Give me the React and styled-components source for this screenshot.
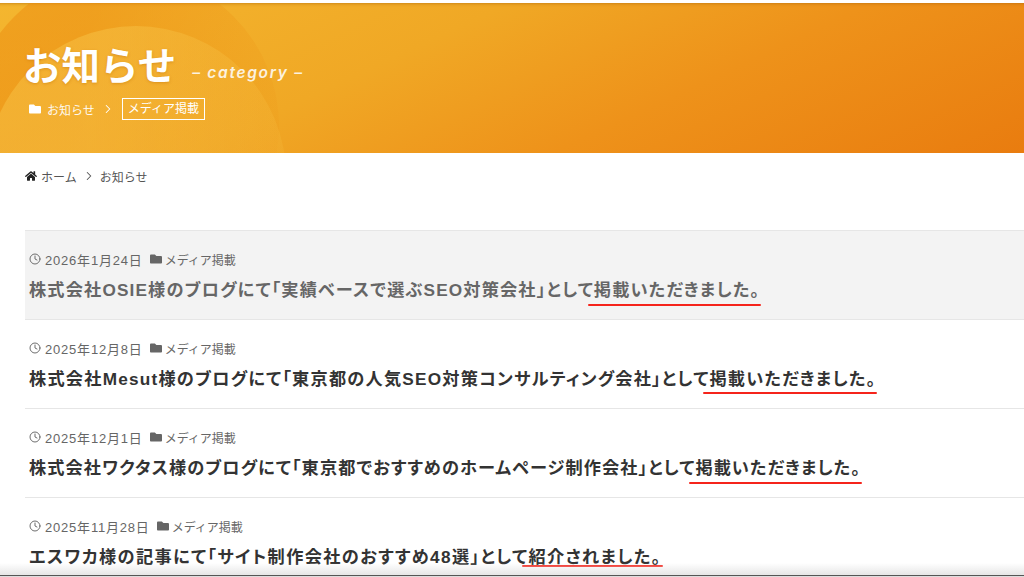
import React from "react";
import styled, { createGlobalStyle } from "styled-components";
import { FaFolder, FaHome } from "react-icons/fa";
import { Clock, ChevronRight } from "lucide-react";

const GlobalStyle = createGlobalStyle`
    html, body {
        margin: 0;
        padding: 0;
        background: #fff;
    }
    body {
        font-family: "Liberation Sans", "Noto Sans CJK JP", sans-serif;
    }
`

const Page = styled.div`
    position: relative;
    width: 1024px;
    height: 577px;
    overflow: hidden;
    padding-top: 3px;
    box-sizing: border-box;
    background: #fff;
`

// Hero

const Hero = styled.header`
    position: relative;
    height: 150px;
    box-sizing: border-box;
    padding: 36px 25px 0;
    overflow: hidden;
    color: #fff;
    background: linear-gradient(155deg, #f4b62f 0%, #f0a825 38%, #ee921a 65%, #e97c0f 100%);
    box-shadow: inset 0 4px 3px -3px rgba(170, 100, 10, 0.5);
`

const DarkDisc = styled.div`
    position: absolute;
    left: -31px;
    top: -32px;
    width: 310px;
    height: 310px;
    border-radius: 50%;
    background: linear-gradient(100deg, rgba(236, 140, 16, 0.5) 35%, rgba(236, 140, 16, 0.12) 90%);
`

const LightDisc = styled.div`
    position: absolute;
    left: -14px;
    top: 23px;
    width: 300px;
    height: 300px;
    border-radius: 50%;
    background: linear-gradient(100deg, rgba(247, 195, 70, 0.5) 35%, rgba(247, 195, 70, 0.16) 95%);
`

const HeroTitleRow = styled.div`
    position: relative;
    display: flex;
    align-items: flex-end;
    gap: 16px;
`

const HeroTitle = styled.h1`
    margin: 0 0 0 -2px;
    font-size: 38.5px;
    line-height: 56px;
    font-weight: 700;
    text-shadow: 0 1px 3px rgba(190, 110, 10, 0.45);
`

const HeroSub = styled.span`
    margin-bottom: 13px;
    font-family: "Inter", "Liberation Sans", sans-serif;
    font-size: 15.5px;
    font-style: italic;
    font-weight: 600;
    letter-spacing: 1.7px;
    opacity: 0.85;
`

const HeroCrumbs = styled.div`
    position: relative;
    display: flex;
    align-items: center;
    margin-top: 3px;
    padding-left: 4px;
    font-size: 12px;
    svg {
        flex: none;
    }
`

const HeroCrumbText = styled.span`
    margin-left: 6px;
    opacity: 0.92;
`

const CategoryTag = styled.span`
    margin-left: 7px;
    border: 1px solid #fff;
    padding: 0 5px;
    height: 22px;
    line-height: 20px;
    box-sizing: border-box;
`

// Breadcrumb

const Breadcrumb = styled.nav`
    display: flex;
    align-items: center;
    height: 20px;
    margin-top: 13px;
    padding-left: 25px;
    font-size: 12px;
    color: #555;
`

const CrumbLabel = styled.span`
    margin-left: 4px;
`

// List

const List = styled.ul`
    list-style: none;
    margin: 44px 0 0 25px;
    padding: 0;
    border-top: 1px solid #e6e6e6;
`

const Item = styled.li`
    height: 88px;
    box-sizing: content-box;
    padding: 0 0 0 4px;
    border-bottom: 1px solid #e6e6e6;
    background: ${props => (props.$active ? "#f3f3f3" : "#fff")};
    color: ${props => (props.$active ? "#666" : "#333")};
`

const Meta = styled.div`
    display: flex;
    align-items: center;
    height: 18px;
    padding-top: 19px;
    font-size: 12px;
    color: #666;
`

const MetaDate = styled.span`
    margin-left: 4px;
    font-size: 13px;
    letter-spacing: 0.8px;
`

const MetaCategory = styled.span`
    display: flex;
    align-items: center;
    margin-left: 7px;
    gap: 3px;
`

const Title = styled.h2`
    margin: 9px 0 0;
    font-size: 17.2px;
    line-height: 26px;
    font-weight: 700;
    white-space: nowrap;
    letter-spacing: ${props => props.$tracking}px;
    font-feature-settings: "palt";
`

// hand drawn red line, sits closer to the text on the last row
const Marked = styled.span`
    position: relative;
    &::after {
        content: "";
        position: absolute;
        left: -6px;
        right: -1px;
        bottom: ${props => props.$lineGap}px;
        height: 2.5px;
        background: #f5241b;
        border-radius: 1px;
    }
`

const BottomShade = styled.div`
    position: absolute;
    left: 0;
    right: 0;
    bottom: 0;
    height: 14px;
    background: linear-gradient(to bottom, rgba(230, 230, 230, 0), rgba(228, 228, 228, 0.9) 84%, #555 86%, #555 93%, #ddd 94%);
`

const posts = [
    { date: "2026年1月24日", before: "株式会社OSIE様のブログにて「実績ベースで選ぶSEO対策会社」として", mark: "掲載いただきました。", active: true, tracking: 1.16, lineGap: -6 },
    { date: "2025年12月8日", before: "株式会社Mesut様のブログにて「東京都の人気SEO対策コンサルティング会社」として", mark: "掲載いただきました。", tracking: 1.22, lineGap: -5 },
    { date: "2025年12月1日", before: "株式会社ワクタス様のブログにて「東京都でおすすめのホームページ制作会社」として", mark: "掲載いただきました。", tracking: 1.08, lineGap: -6 },
    { date: "2025年11月28日", before: "エスワカ様の記事にて「サイト制作会社のおすすめ48選」として", mark: "紹介されました。", tracking: 1.36, lineGap: 0 },
];

export default function App() {
    return (
        <Page>
            <GlobalStyle />

            <Hero>
                <DarkDisc />
                <LightDisc />
                <HeroTitleRow>
                    <HeroTitle>お知らせ</HeroTitle>
                    <HeroSub>– category –</HeroSub>
                </HeroTitleRow>
                <HeroCrumbs>
                    <FaFolder size={12} />
                    <HeroCrumbText>お知らせ</HeroCrumbText>
                    <ChevronRight size={14} strokeWidth={1.8} style={{ marginLeft: 6 }} />
                    <CategoryTag>メディア掲載</CategoryTag>
                </HeroCrumbs>
            </Hero>

            <Breadcrumb>
                <FaHome size={12} color="#222" />
                <CrumbLabel>ホーム</CrumbLabel>
                <ChevronRight size={14} strokeWidth={1.8} style={{ marginLeft: 5 }} />
                <CrumbLabel>お知らせ</CrumbLabel>
            </Breadcrumb>

            <List>
                {posts.map(post => (
                    <Item key={post.date} $active={post.active}>
                        <Meta>
                            <Clock size={12} strokeWidth={1.9} />
                            <MetaDate>{post.date}</MetaDate>
                            <MetaCategory>
                                <FaFolder size={12} />
                                メディア掲載
                            </MetaCategory>
                        </Meta>
                        <Title $tracking={post.tracking}>
                            {post.before}
                            <Marked $lineGap={post.lineGap}>{post.mark}</Marked>
                        </Title>
                    </Item>
                ))}
            </List>

            <BottomShade />
        </Page>
    )
}
